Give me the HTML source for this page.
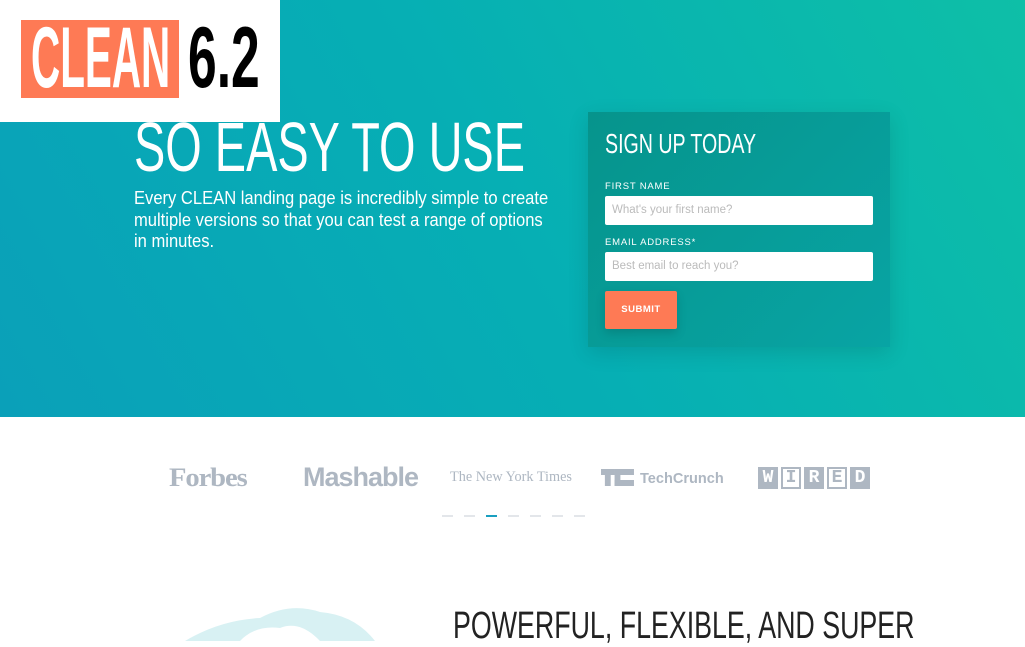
<!DOCTYPE html>
<html><head><meta charset="utf-8"><style>
*{margin:0;padding:0;box-sizing:border-box}
body{width:1025px;height:641px;overflow:hidden;background:#fff;font-family:"Liberation Sans",sans-serif;position:relative}
.hero{position:absolute;left:0;top:0;width:1025px;height:417px;background:linear-gradient(60deg,#0aa0b9 0%,#06afb4 50%,#0ebfa7 100%)}
.logo{position:absolute;left:0;top:0;width:280px;height:122px;background:#fff}
.clean{position:absolute;left:21px;top:20px;width:158px;height:78px;background:#fe7a55;overflow:hidden}
.clean span{position:absolute;left:10px;top:-5px;color:#fff;font-weight:bold;font-size:86px;line-height:86px;transform-origin:0 0;transform:scaleX(0.47);white-space:nowrap}
.ver{position:absolute;left:188px;top:15px;color:#000;font-weight:bold;font-size:86px;line-height:86px;transform-origin:0 0;transform:scaleX(0.6);white-space:nowrap}
.h1{position:absolute;left:134px;top:112px;color:#fff;font-size:70px;line-height:70px;white-space:nowrap;transform-origin:0 0;transform:scaleX(0.67)}
.p{position:absolute;left:134px;top:188px;color:#fff;font-size:18px;line-height:21.5px;white-space:nowrap;transform-origin:0 0;transform:scaleX(0.92)}
.card{position:absolute;left:588px;top:112px;width:302px;height:235px;background:linear-gradient(135deg,#06948c,#08a4a4);box-shadow:0 6px 20px rgba(0,0,0,.12)}
.card h2{position:absolute;left:17px;top:17px;color:#fff;font-weight:normal;font-size:28px;line-height:30px;white-space:nowrap;transform-origin:0 0;transform:scaleX(0.7)}
.lbl{position:absolute;left:17px;color:#fff;font-size:9.5px;letter-spacing:.8px}
.inp{position:absolute;left:17px;width:268px;height:29px;background:#fff;border-radius:2px;color:#bbb;font-size:11.5px;padding:8px 7px}
.btn{position:absolute;left:17px;top:179px;width:72px;height:38px;background:#fe7a55;border-radius:2px;color:#fff;font-weight:bold;font-size:9.5px;letter-spacing:.5px;text-align:center;line-height:38px;box-shadow:0 4px 10px rgba(0,0,0,.15)}
.lg{position:absolute;color:#aeb7c2;font-weight:bold;white-space:nowrap;transform-origin:0 0}
.dots{position:absolute;top:515px;left:442px}
.dots span{position:absolute;top:0;width:11px;height:2px;background:#e3e6ea}
.h3{position:absolute;left:453px;top:606px;color:#222;font-size:38px;line-height:40px;white-space:nowrap;transform-origin:0 0;transform:scaleX(0.705)}
.w{display:inline-block;width:20px;height:22px;line-height:22px;text-align:center;margin-right:3px;font-family:"Liberation Mono",monospace;font-size:18px}
.wf{background:#aeb7c2;color:#fff}
.wo{border:2px solid #aeb7c2;color:#aeb7c2;line-height:18px}
</style></head><body>
<div class="hero"></div>
<div class="logo"><div class="clean"><span>CLEAN</span></div><div class="ver">6.2</div></div>
<div class="h1">SO EASY TO USE</div>
<div class="p">Every CLEAN landing page is incredibly simple to create<br>multiple versions so that you can test a range of options<br>in minutes.</div>
<div class="card">
<h2>SIGN UP TODAY</h2>
<div class="lbl" style="top:69px">FIRST NAME</div>
<div class="inp" style="top:84px">What's your first name?</div>
<div class="lbl" style="top:125px">EMAIL ADDRESS*</div>
<div class="inp" style="top:140px">Best email to reach you?</div>
<div class="btn">SUBMIT</div>
</div>
<div class="lg" style="left:169px;top:463px;font-family:'Liberation Serif',serif;font-size:26px;letter-spacing:-1px;transform:scaleX(1.1)">Forbes</div>
<div class="lg" style="left:303px;top:462px;font-size:27px;letter-spacing:-1px;transform:scaleX(1.0)">Mashable</div>
<div class="lg" style="left:450px;top:469px;font-family:'Liberation Serif',serif;font-weight:normal;font-size:15px;transform:scaleX(0.95)">The New York Times</div>
<div class="lg" style="left:601px;top:469px;font-size:15px;transform:scaleX(0.97)"><span style="display:inline-block;width:36px;height:17px;vertical-align:-3px;background:linear-gradient(#aeb7c2,#aeb7c2) 0 0/14px 6px no-repeat,linear-gradient(#aeb7c2,#aeb7c2) 4px 0/6px 17px no-repeat,linear-gradient(#aeb7c2,#aeb7c2) 14px 0/20px 6px no-repeat,linear-gradient(#aeb7c2,#aeb7c2) 14px 0/6px 17px no-repeat,linear-gradient(#aeb7c2,#aeb7c2) 14px 11px/20px 6px no-repeat"></span> TechCrunch</div>
<div class="lg" style="left:758px;top:467px;font-size:0"><span class="w wf">W</span><span class="w wo">I</span><span class="w wf">R</span><span class="w wo">E</span><span class="w wf">D</span></div>
<div class="dots"><span style="left:0"></span><span style="left:22px"></span><span style="left:44px;background:#1a9fc0"></span><span style="left:66px"></span><span style="left:88px"></span><span style="left:110px"></span><span style="left:132px"></span></div>
<svg style="position:absolute;left:180px;top:600px" width="200" height="41"><path d="M5 41 Q40 20 80 18 Q110 2 140 12 Q175 15 195 41Z" fill="#d8f1f3"/><path d="M60 41 Q75 25 100 28 Q120 20 140 41Z" fill="#fff"/></svg>
<div class="h3">POWERFUL, FLEXIBLE, AND SUPER</div>
</body></html>
